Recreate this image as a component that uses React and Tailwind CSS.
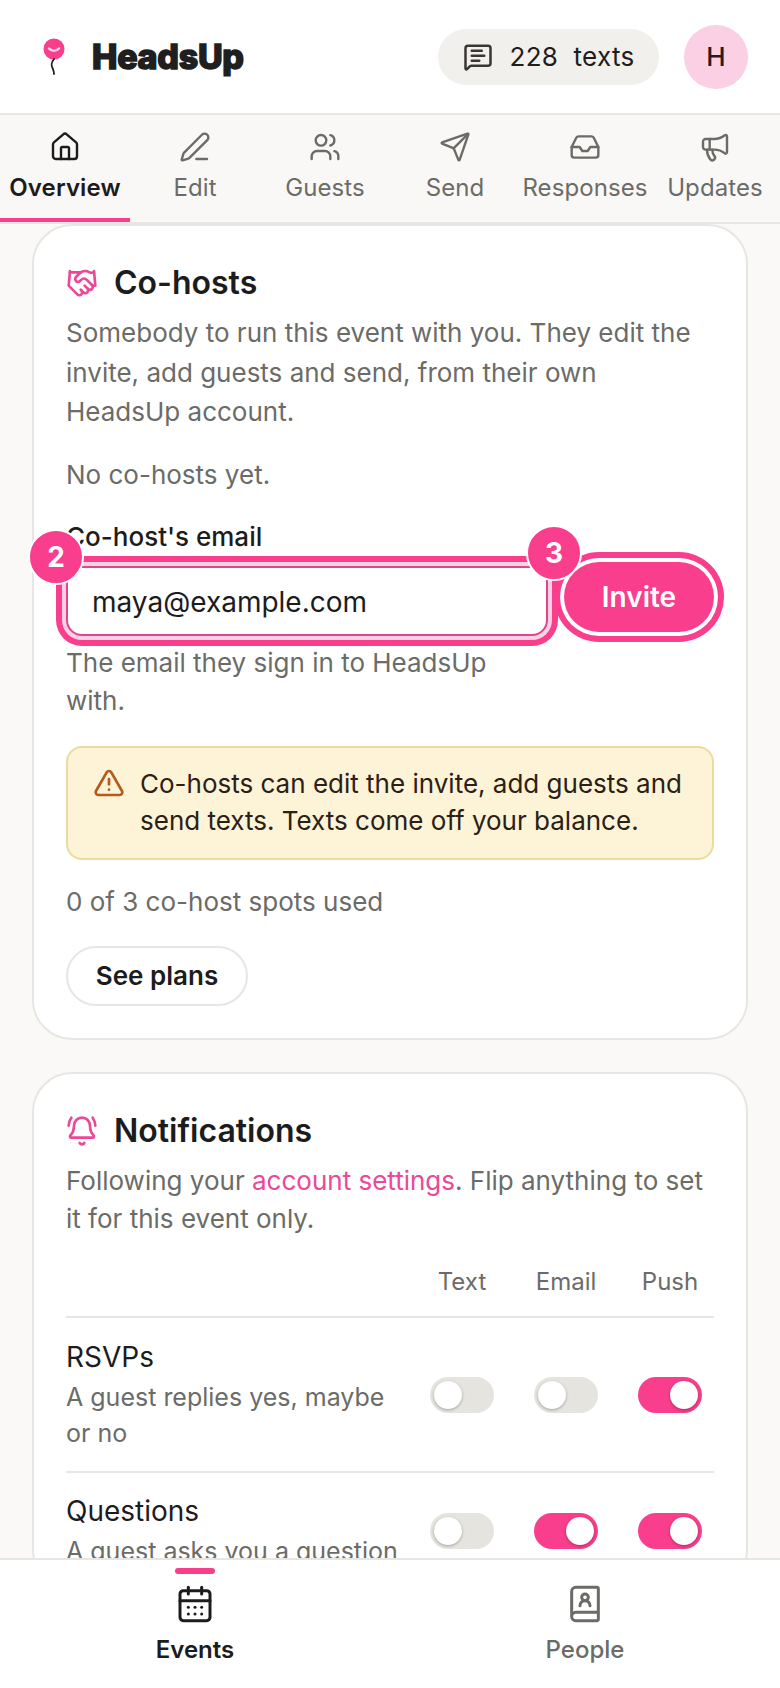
import { House, PenLine, Users, Send, Inbox, Megaphone, MessageSquareText, Handshake, BellRing, TriangleAlert, CalendarDays, BookUser } from "lucide-react";

const tabs = [
  { label: "Overview", icon: House, active: true },
  { label: "Edit", icon: PenLine },
  { label: "Guests", icon: Users },
  { label: "Send", icon: Send },
  { label: "Responses", icon: Inbox },
  { label: "Updates", icon: Megaphone },
];

function Balloon() {
  return (
    <svg width="24" height="38" viewBox="0 0 24 38" fill="none">
      <circle cx="12" cy="11" r="10.5" fill="#f83e8c" />
      <path d="M7 10.500c2.500 3 7.500 3 10 0" stroke="#fbd0e4" strokeWidth="2.400" strokeLinecap="round" />
      <path d="M12 21c-3 4-3 6-1.500 9 .8 1.800 1.500 3 1.500 6" stroke="#1f1f1f" strokeWidth="1.800" strokeLinecap="round" />
    </svg>
  );
}

function Toggle({ on }) {
  return (
    <div className={on ? "flex h-9 w-16 items-center justify-end rounded-full bg-[#f83e8c] p-1" : "flex h-9 w-16 items-center justify-start rounded-full bg-[#e6e4df] p-1"}>
      <div className="h-7 w-7 rounded-full bg-white shadow-[0_1px_3px_rgba(0,0,0,0.3)]" />
    </div>
  );
}

function Row({ title, sub, values, last }) {
  return (
    <div className={last ? "flex items-center justify-between pt-5 pb-[18px]" : "flex items-center justify-between border-b-2 border-[#e8e6e2] pt-[21px] pb-[20px]"}>
      <div className="w-[340px]">
        <div className="text-[28px] leading-9 text-[#1c1c1c]">{title}</div>
        <div className="mt-1 text-[25px] leading-[36px] text-[#6b6b68]">{sub}</div>
      </div>
      <div className="flex gap-10 pr-3">
        {values.map((on, i) => (
          <Toggle key={i} on={on} />
        ))}
      </div>
    </div>
  );
}

export default function App() {
  return (
    <div className="flex h-[1688px] w-[780px] flex-col overflow-hidden bg-[#faf9f7] font-['Inter',sans-serif]">
      <header className="flex h-[113px] shrink-0 items-center justify-between bg-white pl-[42px] pr-8">
        <div className="flex items-center gap-[26px]">
          <Balloon />
          <span className="text-[34px] font-extrabold tracking-[-0.3px] text-[#1f1f1f] [-webkit-text-stroke:1.5px_#1f1f1f]">HeadsUp</span>
        </div>
        <div className="flex items-center gap-[25px]">
          <div className="flex h-14 w-[221px] items-center justify-center gap-[17px] rounded-full bg-[#f2f0ec] text-[26px] tracking-[0.3px] text-[#211d1b]">
            <MessageSquareText size={30} strokeWidth={2} className="text-[#3a3633]" />
            <span className="whitespace-pre">228  texts</span>
          </div>
          <div className="flex h-16 w-16 items-center justify-center rounded-full bg-[#fbd0e4] text-[26px] font-medium text-[#2a1a20]">H</div>
        </div>
      </header>

      <nav className="grid h-[111px] shrink-0 grid-cols-6 border-y-2 border-[#e8e6e2] bg-[#faf8f6]">
        {tabs.map((tab) => (
          <div
            key={tab.label}
            className={tab.active ? "flex flex-col items-center border-b-4 border-[#f83e8c] pt-[16px] font-semibold text-[#1c1c1c]" : "flex flex-col items-center pt-[16px] text-[#6b6b68]"}
          >
            <tab.icon size={32} strokeWidth={1.8} />
            <span className="mt-[9px] text-[24px] leading-8 tracking-[0.1px] whitespace-nowrap">{tab.label}</span>
          </div>
        ))}
      </nav>

      <main className="min-h-0 flex-1 overflow-hidden px-8">
        <section className="rounded-[40px] border-2 border-[#e8e6e2] bg-white px-8 pt-[37px] pb-[32px]">
          <div className="flex items-center gap-4">
            <Handshake size={32} strokeWidth={2} className="text-[#ec4899]" />
            <h2 className="text-[32px] font-semibold leading-10 text-[#1c1c1c]">Co-hosts</h2>
          </div>
          <p className="mt-[10px] text-[26px] leading-[39.5px] text-[#6b6b68]">
            Somebody to run this event with you. They edit the invite, add guests and send, from their own HeadsUp account.
          </p>
          <p className="mt-[23px] text-[26px] leading-[40px] text-[#6b6b68]">No co-hosts yet.</p>

          <div className="relative mt-6 flex items-start gap-4">
            <div className="w-[482px]">
              <label className="block text-[26px] font-medium leading-9 text-[#1c1c1c]">Co-host's email</label>
              <div className="mt-[11px] flex h-[70px] items-center rounded-2xl border-2 border-[#e0468e] bg-white px-6 pt-[2px] text-[28px] text-[#1c1c1c] shadow-[0_0_0_4px_#fbd0e4,0_0_0_10px_#f83e8c]">
                maya@example.com
              </div>
              <p className="mt-2 w-[440px] text-[26px] leading-[38px] text-[#6b6b68]">The email they sign in to HeadsUp with.</p>
            </div>
            <button type="button" className="mt-[43px] flex h-[70px] w-[150px] items-center justify-center rounded-full bg-[#f83e8c] text-[28px] font-semibold text-white shadow-[0_0_0_4px_#ffffff,0_0_0_10px_#f83e8c]">
              Invite
            </button>
            <div className="absolute left-[-38px] top-[10px] flex h-[56px] w-[56px] items-center justify-center rounded-full border-2 border-white bg-[#f83e8c] text-[28px] font-bold text-white">2</div>
            <div className="absolute left-[460px] top-[6px] flex h-[56px] w-[56px] items-center justify-center rounded-full border-2 border-white bg-[#f83e8c] text-[28px] font-bold text-white">3</div>
          </div>

          <div className="mt-[26px] flex gap-[15px] rounded-2xl border-2 border-[#eadc9f] bg-[#fdf3d7] pt-[17px] pb-[19px] pl-[25px] pr-4 text-[26px] leading-[37px] text-[#2a2016]">
            <TriangleAlert size={32} strokeWidth={2} className="mt-[2px] shrink-0 text-[#b45a1a]" />
            <p>Co-hosts can edit the invite, add guests and send texts. Texts come off your balance.</p>
          </div>

          <p className="mt-[22px] text-[26px] leading-[40px] text-[#6b6b68]">0 of 3 co-host spots used</p>
          <button type="button" className="mt-6 h-[60px] w-[182px] rounded-full border-2 border-[#e8e6e2] bg-white text-[26px] font-semibold text-[#1c1c1c]">
            See plans
          </button>
        </section>

        <section className="mt-8 rounded-[40px] border-2 border-[#e8e6e2] bg-white px-8 pt-[37px]">
          <div className="flex items-center gap-4">
            <BellRing size={32} strokeWidth={2} className="text-[#ec4899]" />
            <h2 className="text-[32px] font-semibold leading-10 text-[#1c1c1c]">Notifications</h2>
          </div>
          <p className="mt-[11px] text-[26px] leading-[38px] text-[#6b6b68]">
            Following your <span className="text-[#ec4899]">account settings</span>. Flip anything to set it for this event only.
          </p>
          <div className="mt-[26px] flex justify-end gap-10 border-b-2 border-[#e8e6e2] pb-4 pr-3 text-[24px] leading-9 text-[#6b6b68]">
            <span className="w-16 text-center">Text</span>
            <span className="w-16 text-center">Email</span>
            <span className="w-16 text-center">Push</span>
          </div>
          <Row title="RSVPs" sub="A guest replies yes, maybe or no" values={[false, false, true]} />
          <Row title="Questions" sub="A guest asks you a question" values={[false, true, true]} last />
        </section>
      </main>

      <footer className="grid h-[130px] shrink-0 grid-cols-2 border-t-2 border-[#e8e6e2] bg-white">
        <div className="relative flex flex-col items-center pt-6 text-[#1c1c1c]">
          <div className="absolute top-2 h-[6px] w-10 rounded-full bg-[#f83e8c]" />
          <CalendarDays size={40} strokeWidth={1.8} />
          <span className="mt-[10px] text-[24px] font-semibold leading-8">Events</span>
        </div>
        <div className="flex flex-col items-center pt-6 text-[#6b6b68]">
          <BookUser size={40} strokeWidth={1.8} />
          <span className="mt-[10px] text-[24px] font-medium leading-8">People</span>
        </div>
      </footer>
    </div>
  );
}
